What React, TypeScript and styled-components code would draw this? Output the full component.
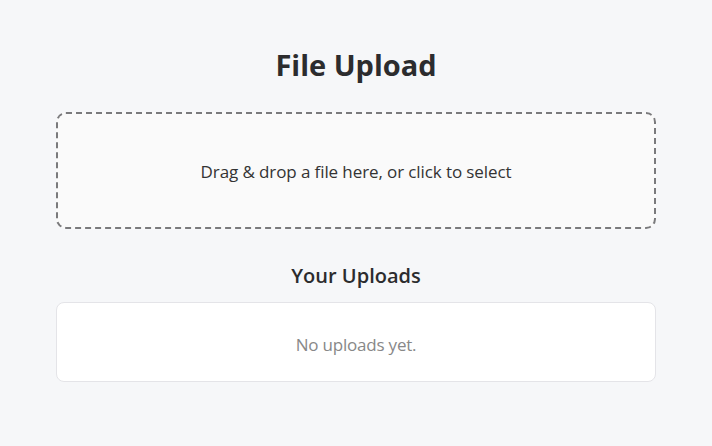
import React from 'react';
import styled, { createGlobalStyle } from 'styled-components';

const GlobalStyle = createGlobalStyle`
  body {
    margin: 0;
    background: #f6f7f9;
    font-family: "Open Sans", "Noto Sans", sans-serif;
    color: #2e2e30;
  }
`;

const Page = styled.main`
  width: 600px;
  margin: 0 auto;
  padding-top: 44px;
  display: flex;
  flex-direction: column;
`;

const Title = styled.h1`
  margin: 0 0 26px;
  font-size: 29px;
  line-height: 42px;
  font-weight: 700;
  text-align: center;
  color: #2c2c2e;
`;

const DropZone = styled.div`
  border: 2px dashed #7a7a7c;
  border-radius: 10px;
  background: #fafafa;
  padding: 46px 20px 43px;
  text-align: center;
  font-size: 17px;
  line-height: 24px;
  color: #333;
  letter-spacing: -0.1px;
  cursor: pointer;
`;

const SectionTitle = styled.h2`
  margin: 33px 0 12px;
  font-size: 20px;
  line-height: 28px;
  font-weight: 600;
  text-align: center;
  color: #2c2c2e;
`;

const UploadList = styled.div`
  background: #fff;
  border: 1px solid #e4e4e8;
  border-radius: 8px;
  height: 78px;
  display: flex;
  align-items: center;
  justify-content: center;
`;

const Empty = styled.p`
  margin: 4px 0 0;
  font-size: 17px;
  color: #888;
  letter-spacing: -0.2px;
`;

export default function App() {
  return (
    <>
      <GlobalStyle />
      <Page>
        <Title>File Upload</Title>
        <DropZone>Drag &amp; drop a file here, or click to select</DropZone>
        <SectionTitle>Your Uploads</SectionTitle>
        <UploadList>
          <Empty>No uploads yet.</Empty>
        </UploadList>
      </Page>
    </>
  );
}
